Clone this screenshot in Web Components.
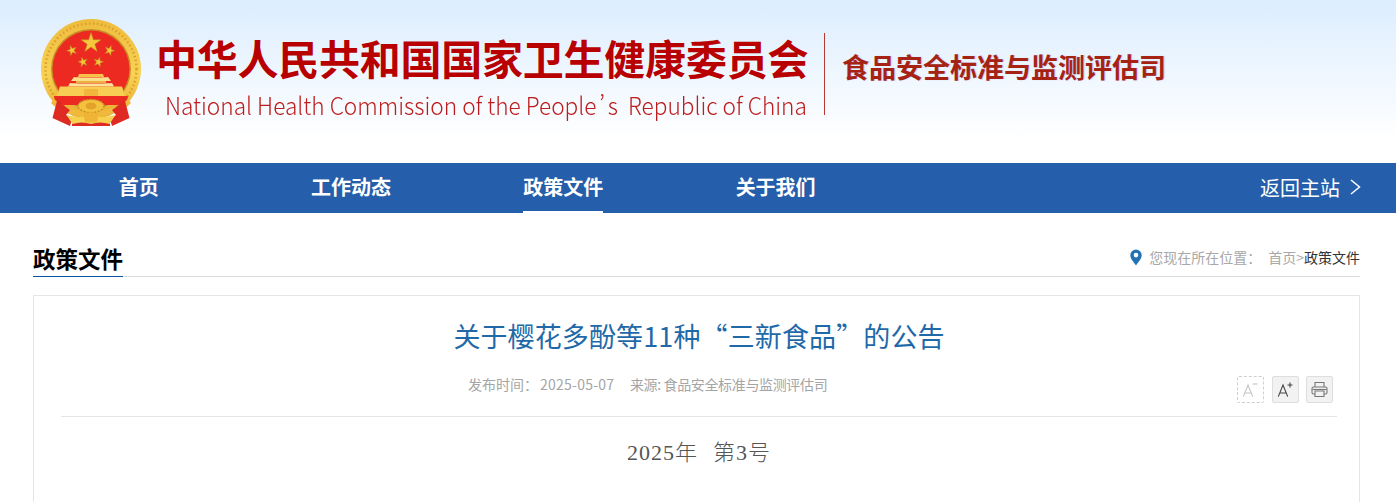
<!DOCTYPE html>
<html lang="zh-CN">
<head>
<meta charset="utf-8">
<title>关于樱花多酚等11种“三新食品”的公告</title>
<style>
  html, body { margin: 0; padding: 0; background: #fff; overflow: hidden; height: 502px; }
  body { font-family: "Noto Sans CJK SC", "Liberation Sans", sans-serif; }
</style>
</head>
<body>
<nhc-header></nhc-header>
<nhc-nav>
  <nav-link>首页</nav-link>
  <nav-link>工作动态</nav-link>
  <nav-link active>政策文件</nav-link>
  <nav-link>关于我们</nav-link>
</nhc-nav>
<page-head label="政策文件"></page-head>
<article-card></article-card>

<script>
const CJK = '"Noto Sans CJK SC", "Liberation Sans", sans-serif'

function star(cx, cy, r, rot) {
    let pts = []
    for (let i = 0; i < 10; i++) {
        let rad = i % 2 ? r * 0.382 : r
        let a = (rot + i * 36 - 90) * Math.PI / 180
        pts.push((cx + rad * Math.cos(a)).toFixed(2) + ',' + (cy + rad * Math.sin(a)).toFixed(2))
    }
    return `<polygon points="${pts.join(' ')}" fill="#f6c63c" stroke="#b98a1c" stroke-width=".5"/>`
}

class NhcEmblem extends HTMLElement {
    constructor() {
        super()
        this.attachShadow({ mode: 'open' })
        this.shadowRoot.innerHTML = `
        <style>
          :host { display: block; width: 110px; height: 115px; flex: none; }
          svg { display: block; }
        </style>
        <svg width="110" height="115" viewBox="0 0 110 115">
          <defs>
            <linearGradient id="gold" x1="0" y1="0" x2="0" y2="1">
              <stop offset="0" stop-color="#eebc3e"/>
              <stop offset=".55" stop-color="#f8d254"/>
              <stop offset="1" stop-color="#e6a92a"/>
            </linearGradient>
            <filter id="soft" x="-5%" y="-5%" width="110%" height="110%"><feGaussianBlur stdDeviation=".35"/></filter>
          </defs>
          <g filter="url(#soft)">
            <circle cx="55" cy="54" r="50" fill="url(#gold)"/>
            <circle cx="55" cy="54" r="45.500" fill="none" stroke="#dc9f2a" stroke-width="2.500" stroke-dasharray="1.500 2.500"/>
            <circle cx="55" cy="54" r="40" fill="#c98d22"/>
            <circle cx="55" cy="54" r="38.500" fill="#ec2c24"/>
            ${star(55, 28, 10.500, 0)}
            ${star(36, 35.500, 5.200, -20)}
            ${star(73.500, 35.500, 5.200, 20)}
            ${star(47, 47, 5, -15)}
            ${star(62.500, 47, 5, 15)}
            <path d="M43 59h24l1 3H42z" fill="#f6c24a"/>
            <path d="M38 62c6 .8 28 .8 34 0l3 4H35z" fill="#fbe08c"/>
            <path d="M40 66h30v2H40z" fill="#eeb040"/>
            <path d="M34 68c6 .8 36 .8 42 0l2 3.500H32z" fill="#fbe39a"/>
            <path d="M24 71.500h62l3 9.500H21z" fill="#f8cd52"/>
            <path d="M48 74h14v7H48z" fill="#f3b63e"/>
            <path d="M18 81h74l-1 6-9 3H28l-9-3z" fill="#ec2c24"/>
            <path d="M18 84c8 8 23 12 37 12s29-4 37-12l3 4c-9 10-26 14-40 14s-31-4-40-14z" fill="#f0b93a"/>
            <path d="M22 82L16.500 103 34 111l2-7-6-4 4-5c-5-3-9-7-12-13z" fill="#de2a20"/>
            <path d="M88 82l5.500 21L76 111l-2-7 6-4-4-5c5-3 9-7 12-13z" fill="#de2a20"/>
            <path d="M36 103h38v8H36z" fill="#de2a20"/>
            <path d="M30.500 100c6 1.500 11 2 17 1.500l7.500 1 7.500-1c6 .5 11 0 17-1.500l-6 9c-6-2-12-2-18.500 0-6.500-2-12.500-2-18.500 0z" fill="#f8d050"/>
            <ellipse cx="55" cy="91" rx="13" ry="6.500" fill="#f4c23e" stroke="#c9922a" stroke-width="1.500" stroke-dasharray="2 1.500"/>
            <ellipse cx="55" cy="91" rx="5.500" ry="3.500" fill="#e3a32a"/>
            <path d="M47 98.500c4-1.500 12-1.500 16 0l-2 9H49z" fill="#efb436"/>
          </g>
        </svg>
        `
    }
}

class NhcHeader extends HTMLElement {
    constructor() {
        super()
        this.attachShadow({ mode: 'open' })
        this.shadowRoot.innerHTML = `
        <style>
          :host {
            display: flex;
            height: 163px;
            box-sizing: border-box;
            padding: 15px 0 0 36px;
            background: linear-gradient(#dcedfe, #ffffff 86%);
            font-family: ${CJK};
          }
          .names { margin-left: 10px; padding-top: 14px; width: 656px; flex: none; }
          .cn {
            font-size: 41px;
            line-height: 56px;
            font-weight: 700;
            letter-spacing: -.24px;
            color: #b80000;
            white-space: nowrap;
          }
          .en {
            font-size: 24px;
            line-height: 34px;
            margin: 3px 0 0 9px;
            font-weight: 300;
            font-variant-east-asian: proportional-width;
            color: #bc1c1c;
            white-space: pre;
            transform: scaleX(.943);
            transform-origin: left center;
          }
          .en span { margin: 0 3px; }
          .rule { width: 1px; height: 82px; margin: 18px 0 0 12px; background: #b83a2f; flex: none; }
          .dept {
            margin: 32px 0 0 17px;
            font-size: 27px;
            line-height: 40px;
            font-weight: 700;
            color: #a62313;
            text-shadow: 1px 0 1px rgba(110, 100, 200, .35);
            white-space: nowrap;
          }
        </style>
        <nhc-emblem></nhc-emblem>
        <div class="names">
          <div class="cn">中华人民共和国国家卫生健康委员会</div>
          <div class="en">National Health Commission of the People<span>’</span>s  Republic of China</div>
        </div>
        <div class="rule"></div>
        <div class="dept">食品安全标准与监测评估司</div>
        `
    }
}

class NhcNav extends HTMLElement {
    constructor() {
        super()
        this.attachShadow({ mode: 'open' })
        this.shadowRoot.innerHTML = `
        <style>
          :host {
            display: flex;
            height: 50px;
            padding: 0 34px 0 32.600px;
            background: #255eaa;
            color: #fff;
            font-family: ${CJK};
          }
          .links { display: flex; flex: 1; }
          .back { display: flex; align-items: center; gap: 9px; height: 48px; font-size: 20px; }
          svg { display: block; }
        </style>
        <div class="links"><slot></slot></div>
        <div class="back">返回主站
          <svg width="13" height="16" viewBox="0 0 13 16"><path d="M2 1l8.500 7L2 15" fill="none" stroke="#fff" stroke-width="1.500"/></svg>
        </div>
        `
    }
}

class NavLink extends HTMLElement {
    constructor() {
        super()
        this.attachShadow({ mode: 'open' })
        this.shadowRoot.innerHTML = `
        <style>
          :host {
            display: flex;
            justify-content: center;
            width: 212.300px;
            font-size: 20px;
            font-weight: 700;
            line-height: 48px;
          }
          span { display: block; height: 50px; box-sizing: border-box; }
          :host([active]) span { border-bottom: 2px solid #fff; }
        </style>
        <span><slot></slot></span>
        `
    }
}

class PageHead extends HTMLElement {
    constructor() {
        super()
        this.attachShadow({ mode: 'open' })
        this.shadowRoot.innerHTML = `
        <style>
          :host {
            display: flex;
            justify-content: space-between;
            align-items: flex-end;
            height: 64px;
            box-sizing: border-box;
            margin: 0 36px 0 33px;
            border-bottom: 1px solid #dcdcdc;
            font-family: ${CJK};
          }
          h2 {
            margin: 0 0 -1px;
            font-size: 22.500px;
            line-height: 32px;
            height: 34px;
            font-weight: 700;
            color: #000;
            border-bottom: 1px solid #0a56a4;
          }
          .crumbs {
            display: flex;
            align-items: center;
            height: 38px;
            font-size: 14px;
            color: #a8a8a8;
            white-space: pre;
          }
          svg { display: block; margin-right: 7px; }
          .cur { color: #333; }
          .where { margin-right: 7px; }
        </style>
        <h2></h2>
        <div class="crumbs">
          <svg width="12" height="17" viewBox="0 0 12 17"><path fill-rule="evenodd" d="M6 .5A5.700 5.700 0 0 0 .3 6.200c0 3.600 3.600 7 5.700 10.300 2.100-3.300 5.700-6.700 5.700-10.300A5.700 5.700 0 0 0 6 .5zm0 3.300a2.300 2.300 0 1 1 0 4.600 2.300 2.300 0 0 1 0-4.600z" fill="#2272b4"/></svg>
          <span class="where">您现在所在位置：</span><span>首页&gt;</span><span class="cur"></span>
        </div>
        `
        let label = this.getAttribute('label')
        this.shadowRoot.querySelector('h2').textContent = label
        this.shadowRoot.querySelector('.cur').textContent = label
    }
}

class ToolButton extends HTMLElement {
    constructor() {
        super()
        this.attachShadow({ mode: 'open' })
        this.shadowRoot.innerHTML = `
        <style>
          :host {
            display: flex;
            align-items: center;
            justify-content: center;
            width: 27px;
            height: 27px;
            box-sizing: border-box;
            border: 1px solid #dedede;
            border-radius: 2px;
            background: #f2f2f2;
            color: #444;
          }
          :host([off]) { border: 1px dashed #cfcfcf; background: #fff; color: #c4c4c4; margin-right: 1px; }
        </style>
        <slot></slot>
        `
    }
}

class ArticleCard extends HTMLElement {
    constructor() {
        super()
        this.attachShadow({ mode: 'open' })
        this.shadowRoot.innerHTML = `
        <style>
          :host {
            display: block;
            margin: 18px 36px 0 33px;
            border: 1px solid #e5e5e5;
            padding: 0 22px 0 27px;
            height: 300px;
            font-family: ${CJK};
          }
          h1 {
            margin: 0;
            padding-top: 20px;
            text-align: center;
            font-size: 27px;
            line-height: 40px;
            font-weight: 400;
            letter-spacing: .12px;
            color: #1f69a9;
          }
          .meta {
            display: flex;
            align-items: center;
            position: relative;
            height: 61px;
            box-sizing: border-box;
            padding-left: 407px;
            border-bottom: 1px solid #e5e5e5;
            font-size: 14px;
            color: #a5a5a5;
            white-space: pre;
          }
          .info { display: flex; margin-bottom: 4px; }
          .date { margin: 0 15.500px 0 2px; letter-spacing: .25px; }
          .src { letter-spacing: -.35px; }
          .tools { position: absolute; right: 4px; top: 20px; display: flex; gap: 7px; }
          svg { display: block; }
          .num {
            margin: 20px 0 0;
            text-align: center;
            font-family: "Liberation Serif", "Noto Sans CJK SC", serif;
            font-size: 22px;
            line-height: 32px;
            font-weight: 200;
            color: #555;
            letter-spacing: 1px;
            word-spacing: 1px;
            white-space: pre;
          }
        </style>
        <h1>关于樱花多酚等11种“三新食品”的公告</h1>
        <div class="meta">
          <div class="info"><span>发布时间：</span><span class="date">2025-05-07</span><span class="src">来源: 食品安全标准与监测评估司</span></div>
          <div class="tools">
            <tool-button off><svg width="19" height="19" viewBox="0 0 19 19" fill="none" stroke="currentColor" stroke-width="1.100"><path d="M2.300 16.600L7 5l4.700 11.600M3.700 13h6.600"/><path d="M11.500 4h5"/></svg></tool-button>
            <tool-button><svg width="19" height="19" viewBox="0 0 19 19" fill="none" stroke="currentColor" stroke-width="1.100"><path d="M2.300 16.600L7 5l4.700 11.600M3.700 13h6.600"/><path d="M11.500 5h5M14 2.500v5"/></svg></tool-button>
            <tool-button><svg width="19" height="19" viewBox="0 0 19 19" fill="none" stroke="#777" stroke-width="1.100"><path d="M5 7V2.500h9V7"/><rect x="2" y="7" width="15" height="7" rx="1.500"/><path d="M5 11h9v5.500H5z" fill="#f2f2f2"/><path d="M2.500 9.500h14"/></svg></tool-button>
          </div>
        </div>
        <p class="num">2025年  第3号</p>
        `
    }
}

customElements.define('nhc-emblem', NhcEmblem)
customElements.define('nhc-header', NhcHeader)
customElements.define('nhc-nav', NhcNav)
customElements.define('nav-link', NavLink)
customElements.define('page-head', PageHead)
customElements.define('tool-button', ToolButton)
customElements.define('article-card', ArticleCard)
</script>
</body>
</html>
